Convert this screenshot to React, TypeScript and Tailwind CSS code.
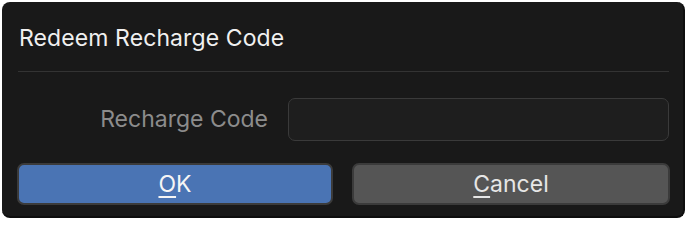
import React from "react";

export default function App() {
  return (
    <div className="w-[687px] h-[221px] bg-white p-[2px]" style={{ fontFamily: "Inter, 'Noto Sans', sans-serif" }}>
      <div className="w-[683px] h-[216px] rounded-[8px] bg-[#191919] border-r-2 border-b-2 border-[#0e0e0e] flex flex-col pl-[15px] pr-[13px]">
        <div className="h-[69px] flex items-center pl-[2px] pt-[4px]">
          <span className="text-[23px] text-[#f0f0f0] tracking-[0.1px]">Redeem Recharge Code</span>
        </div>
        <div className="h-px bg-[#333333] ml-[1px] mr-[1px]" />
        <div className="flex items-center mt-[26px] h-[43px]">
          <div className="w-[251px] text-right text-[23px] text-[#8c8c8c]">Recharge Code</div>
          <div className="ml-[20px] flex-1 h-[43px] rounded-[7px] border border-[#3a3a3a] bg-[#1e1e1e] mr-[1px]" />
        </div>
        <div className="flex gap-[19px] mt-[22px]">
          <button className="w-[316px] h-[42px] rounded-[7px] bg-[#4a74b4] border-2 border-[#3b3b3b] text-[23px] text-[#f5f5f5] flex items-center justify-center">
            <span><span className="underline underline-offset-[4px] decoration-[1.5px]">O</span>K</span>
          </button>
          <button className="flex-1 h-[42px] rounded-[7px] bg-[#555555] border-2 border-[#3b3b3b] text-[23px] text-[#e6e6e6] flex items-center justify-center">
            <span><span className="underline underline-offset-[4px] decoration-[1.5px]">C</span>ancel</span>
          </button>
        </div>
      </div>
    </div>
  );
}
